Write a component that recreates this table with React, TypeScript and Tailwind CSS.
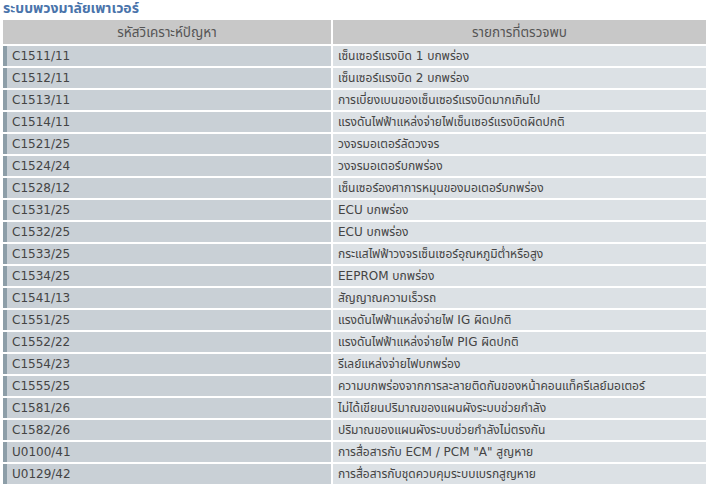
import React from 'react';

const ROWS: [string, string][] = [
  ['C1511/11', 'เซ็นเซอร์แรงบิด 1 บกพร่อง'],
  ['C1512/11', 'เซ็นเซอร์แรงบิด 2 บกพร่อง'],
  ['C1513/11', 'การเบี่ยงเบนของเซ็นเซอร์แรงบิดมากเกินไป'],
  ['C1514/11', 'แรงดันไฟฟ้าแหล่งจ่ายไฟเซ็นเซอร์แรงบิดผิดปกติ'],
  ['C1521/25', 'วงจรมอเตอร์ลัดวงจร'],
  ['C1524/24', 'วงจรมอเตอร์บกพร่อง'],
  ['C1528/12', 'เซ็นเซอร์องศาการหมุนของมอเตอร์บกพร่อง'],
  ['C1531/25', 'ECU บกพร่อง'],
  ['C1532/25', 'ECU บกพร่อง'],
  ['C1533/25', 'กระแสไฟฟ้าวงจรเซ็นเซอร์อุณหภูมิต่ำหรือสูง'],
  ['C1534/25', 'EEPROM บกพร่อง'],
  ['C1541/13', 'สัญญาณความเร็วรถ'],
  ['C1551/25', 'แรงดันไฟฟ้าแหล่งจ่ายไฟ IG ผิดปกติ'],
  ['C1552/22', 'แรงดันไฟฟ้าแหล่งจ่ายไฟ PIG ผิดปกติ'],
  ['C1554/23', 'รีเลย์แหล่งจ่ายไฟบกพร่อง'],
  ['C1555/25', 'ความบกพร่องจากการละลายติดกันของหน้าคอนแท็ครีเลย์มอเตอร์'],
  ['C1581/26', 'ไม่ได้เขียนปริมาณของแผนผังระบบช่วยกำลัง'],
  ['C1582/26', 'ปริมาณของแผนผังระบบช่วยกำลังไม่ตรงกัน'],
  ['U0100/41', 'การสื่อสารกับ ECM / PCM "A" สูญหาย'],
  ['U0129/42', 'การสื่อสารกับชุดควบคุมระบบเบรกสูญหาย'],
];

const font = "font-['Tahoma','DejaVu_Sans','Noto_Sans_Thai','Noto_Sans',sans-serif]";

export default function App() {
  return (
    <div className={`w-[713px] h-[490px] bg-white px-[3px] text-[12px] text-[#444] ${font}`}>
      <h1 className="h-[18px] leading-[16px] text-[14px] font-bold text-[#4a74ab]">ระบบพวงมาลัยเพาเวอร์</h1>
      <div className="w-[703px] grid grid-cols-[328px_373px] gap-[2px] mt-[2px]">
        <div className="h-[24px] bg-[#c8c8c8] flex items-center justify-center text-[13.5px] text-[#555]">รหัสวิเคราะห์ปัญหา</div>
        <div className="h-[24px] bg-[#c8c8c8] flex items-center justify-center text-[13.5px] text-[#555]">รายการที่ตรวจพบ</div>
        {ROWS.map(([code, desc]) => (
          <React.Fragment key={code}>
            <div className="h-[20px] bg-[#c9d0d6] border-l-4 border-[#8d9ea8] pl-[5px] flex items-center">{code}</div>
            <div className="h-[20px] bg-[#dce1e5] pl-[5px] flex items-center">{desc}</div>
          </React.Fragment>
        ))}
      </div>
    </div>
  );
}
